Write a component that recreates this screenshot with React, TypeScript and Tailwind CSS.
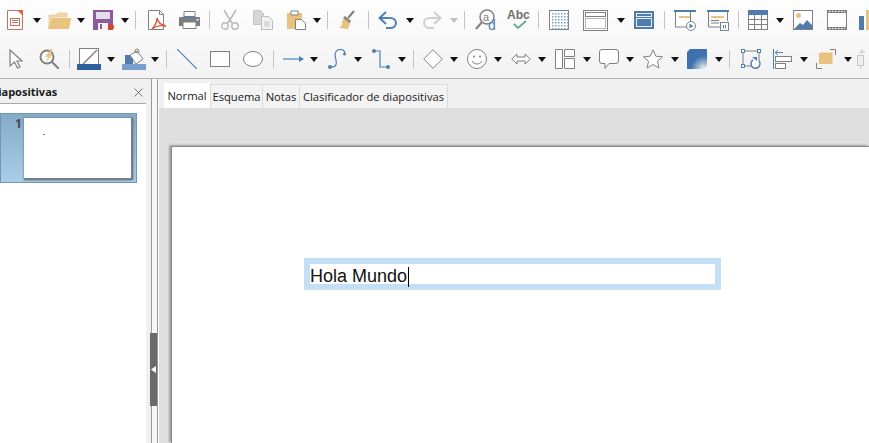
import type { ReactNode } from 'react';

const BLUE = '#4f81b5';
const GRAY = '#808080';
const LIGHT = '#b8b8b8';
const TAN = '#e8c27f';

interface IconProps {
  className: string;
}

function Svg({ className, w, h, children }: IconProps & { w: number; h: number; children: ReactNode }) {
  return (
    <svg aria-hidden className={`shrink-0 ${className}`} viewBox={`0 0 ${w} ${h}`} fill="none">
      {children}
    </svg>
  );
}

function Caret({ className }: IconProps) {
  return (
    <svg aria-hidden className={`h-[5px] w-[8px] shrink-0 ${className}`} viewBox="0 0 8 5">
      <path d="M0 0h8L4 5z" fill="#111" />
    </svg>
  );
}

function Sep({ className }: IconProps) {
  return <span className={`h-[18px] w-px shrink-0 bg-[#c4c4c4] ${className}`} />;
}

function NewDoc({ className }: IconProps) {
  return (
    <Svg className={className} w={16} h={20}>
      <path d="M.5.5h11l4 4v15H.5z" fill="#fff" stroke="#c5705c" />
      <path d="M10 0h6v6z" fill="#d9653f" />
      <rect x="3.5" y="8.5" width="9" height="7" stroke="#c5705c" />
      <path d="M5 10.500h6M5 12.500h6" stroke="#c5705c" />
    </Svg>
  );
}

function Folder({ className }: IconProps) {
  return (
    <Svg className={className} w={23} h={17}>
      <path d="M1 16V3h7l2-2h9v4H5z" fill="#f1d8a8" stroke="#e3c285" strokeWidth=".6" />
      <path d="M0 17l4-11h19v1l-2 10z" fill={TAN} />
    </Svg>
  );
}

function Save({ className }: IconProps) {
  return (
    <Svg className={className} w={21} h={20}>
      <path d="M0 0h20v20H0z" fill="#8e5a9e" />
      <path d="M3 2h14v7H3z" fill="#e6dcea" />
      <path d="M5 13h10v7H5z" fill="#f4f0f6" />
      <path d="M7 14h2v5H7z" fill="#8e5a9e" />
      <circle cx="18" cy="17" r="3" fill="#d4472a" />
    </Svg>
  );
}

function Pdf({ className }: IconProps) {
  return (
    <Svg className={className} w={19} h={20}>
      <path d="M.5.5h11l4 4v15H.5z" fill="#fff" stroke={GRAY} />
      <path d="M11.500.5v4h4" stroke={GRAY} />
      <path d="M9 8c1 4 3 7 9 8-5-1-10 0-14 3 3-3 5-7 5-11z" stroke="#d8533c" strokeWidth="1.400" fill="#fff" />
    </Svg>
  );
}

function Print({ className }: IconProps) {
  return (
    <Svg className={className} w={21} h={18}>
      <path d="M5 .5h11V6H5z" fill="#fff" stroke={GRAY} />
      <path d="M5 5h11v2H5z" fill={BLUE} />
      <path d="M0 7a1 1 0 0 1 1-1h19a1 1 0 0 1 1 1v8H0z" fill="#7d7d7d" />
      <path d="M4 11h13v6.500H4z" fill="#fff" stroke={GRAY} />
      <path d="M17.500 8h2v1.500h-2z" fill="#fff" />
    </Svg>
  );
}

function Cut({ className }: IconProps) {
  return (
    <Svg className={className} w={18} h={20}>
      <path d="M3 0l8 13M15 0L7 13" stroke={LIGHT} strokeWidth="1.500" />
      <circle cx="4" cy="16" r="3.200" stroke={LIGHT} strokeWidth="1.400" />
      <circle cx="14" cy="16" r="3.200" stroke={LIGHT} strokeWidth="1.400" />
    </Svg>
  );
}

function Copy({ className }: IconProps) {
  return (
    <Svg className={className} w={20} h={20}>
      <path d="M.5.5h7l3 3v11H.5z" fill="#d6d6d6" stroke="#c4c4c4" />
      <path d="M8.500 6.500h7l4 4v9h-11z" fill="#f2f2f2" stroke="#bcbcbc" />
      <path d="M11 12h6M11 14h6M11 16h6" stroke="#c4c4c4" />
    </Svg>
  );
}

function Paste({ className }: IconProps) {
  return (
    <Svg className={className} w={20} h={20}>
      <path d="M0 3h15v16H0z" fill={TAN} />
      <path d="M4 1h7v4H4z" fill="#fff" stroke={GRAY} />
      <path d="M8.500 9.500h6l4 4v6h-10z" fill="#fff" stroke={GRAY} />
    </Svg>
  );
}

function Broom({ className }: IconProps) {
  return (
    <Svg className={className} w={16} h={20}>
      <path d="M15 1L9 8" stroke={GRAY} strokeWidth="2" />
      <path d="M6 6l6 5-3 8-9-1c3-2 3-4 3-6z" fill={TAN} />
      <path d="M6 6l6 5-1.500 2L4 8z" fill="#8a8a8a" />
    </Svg>
  );
}

function Undo({ className }: IconProps) {
  return (
    <Svg className={className} w={20} h={18}>
      <path d="M8 1L1.500 7 8 13" stroke={BLUE} strokeWidth="2" />
      <path d="M2 7h10c8 0 8 10 0 10H8" stroke={BLUE} strokeWidth="2" />
    </Svg>
  );
}

function Redo({ className }: IconProps) {
  return (
    <Svg className={className} w={20} h={18}>
      <path d="M12 1l6.500 6L12 13" stroke="#cfcfcf" strokeWidth="2" />
      <path d="M18 7H8C0 7 0 17 8 17h4" stroke="#cfcfcf" strokeWidth="2" />
    </Svg>
  );
}

function Find({ className }: IconProps) {
  return (
    <Svg className={className} w={22} h={22}>
      <circle cx="12" cy="8" r="7" stroke={GRAY} strokeWidth="1.500" />
      <path d="M7 13L1 20" stroke={GRAY} strokeWidth="2" />
      <text x="8" y="12" fontSize="11" fill={GRAY} fontFamily="Liberation Sans, sans-serif">a</text>
      <text x="13" y="21" fontSize="14" fill={BLUE} fontFamily="Liberation Sans, sans-serif">d</text>
    </Svg>
  );
}

function Abc({ className }: IconProps) {
  return (
    <Svg className={className} w={23} h={22}>
      <text x="0" y="10" fontSize="12" fontWeight="700" fill="#6e6e6e" fontFamily="Liberation Sans, sans-serif">Abc</text>
      <path d="M7 15l4 4 8-7" stroke="#6fa892" strokeWidth="2" />
    </Svg>
  );
}

function Dots({ className }: IconProps) {
  const dots: ReactNode[] = [];
  for (let y = 3; y < 19; y += 3) {
    for (let x = 3; x < 19; x += 3) {
      dots.push(<rect key={`${x}-${y}`} x={x} y={y} width="1.500" height="1.500" fill="#7ba0c8" />);
    }
  }
  return (
    <Svg className={className} w={20} h={20}>
      <rect x=".5" y=".5" width="19" height="19" stroke={GRAY} fill="#fff" />
      {dots}
    </Svg>
  );
}

function Layout({ className }: IconProps) {
  return (
    <Svg className={className} w={25} h={21}>
      <rect x=".5" y=".5" width="24" height="20" stroke={GRAY} fill="#fff" />
      <rect x="2.500" y="2.500" width="20" height="4" stroke={GRAY} />
      <rect x="2.500" y="8.500" width="20" height="10" stroke="#b5b5b5" />
    </Svg>
  );
}

function Master({ className }: IconProps) {
  return (
    <Svg className={className} w={20} h={18}>
      <rect width="20" height="18" fill="#4f7cab" />
      <rect x="2.500" y="2.500" width="15" height="3" stroke="#e4ecf4" />
      <rect x="2.500" y="7.500" width="15" height="8" stroke="#e4ecf4" />
    </Svg>
  );
}

function ShowStart({ className }: IconProps) {
  return (
    <Svg className={className} w={22} h={21}>
      <path d="M0 1h22" stroke="#4f7cab" strokeWidth="2" />
      <path d="M1.500 2v15h15V2" stroke={GRAY} fill="#fff" />
      <path d="M5 7h11" stroke={TAN} strokeWidth="2" />
      <circle cx="17" cy="16" r="4.500" fill="#fff" stroke={GRAY} />
      <path d="M15.500 13.500l4 2.500-4 2.500z" fill={BLUE} />
    </Svg>
  );
}

function ShowTimer({ className }: IconProps) {
  return (
    <Svg className={className} w={22} h={21}>
      <path d="M0 1h22" stroke="#4f7cab" strokeWidth="2" />
      <path d="M1.500 2v15h13M20.500 2v9" stroke={GRAY} />
      <path d="M4 7h13" stroke={TAN} strokeWidth="2" />
      <path d="M4 10.500h8M4 13h8" stroke={GRAY} />
      <rect x="13.500" y="12.500" width="8" height="8" stroke={GRAY} fill="#fff" />
      <path d="M16.500 15v3.500M18.500 15v3.500" stroke={BLUE} />
    </Svg>
  );
}

function TableIcon({ className }: IconProps) {
  return (
    <Svg className={className} w={20} h={20}>
      <rect x=".5" y=".5" width="19" height="19" stroke={GRAY} fill="#fff" />
      <rect width="20" height="5" fill="#4f7cab" />
      <path d="M0 9.500h20M0 14.500h20M6.500 5v15M13.500 5v15" stroke={GRAY} />
    </Svg>
  );
}

function ImageIcon({ className }: IconProps) {
  return (
    <Svg className={className} w={20} h={20}>
      <rect x=".5" y=".5" width="19" height="19" stroke={GRAY} fill="#fff" />
      <circle cx="5.500" cy="5.500" r="2.500" fill={TAN} />
      <path d="M1 19l6-6 3 2 4-5 5 5v4z" fill="#4f7cab" />
    </Svg>
  );
}

function Film({ className }: IconProps) {
  return (
    <Svg className={className} w={20} h={20}>
      <rect x=".5" y=".5" width="19" height="19" stroke={GRAY} fill="#fff" />
      <path d="M0 0h20v3H0zM0 17h20v3H0z" fill={GRAY} />
      <path d="M2 1.500h16M2 18.500h16" stroke="#fff" strokeDasharray="1.500 1.500" />
    </Svg>
  );
}

function ChartIcon({ className }: IconProps) {
  return (
    <Svg className={className} w={12} h={20}>
      <rect y="6" width="5" height="14" fill="#4f7cab" />
      <rect x="7" width="5" height="20" fill={TAN} />
    </Svg>
  );
}

function Pointer({ className }: IconProps) {
  return (
    <Svg className={className} w={14} h={20}>
      <path d="M1 1l12 11H8l3 6-2.500 1-3-6L1 17z" fill="#fff" stroke={GRAY} strokeWidth="1.200" />
    </Svg>
  );
}

function ZoomPan({ className }: IconProps) {
  return (
    <Svg className={className} w={20} h={20}>
      <circle cx="8" cy="8" r="6.500" stroke={GRAY} strokeWidth="2" fill="#fff" />
      <path d="M12.500 12.500L20 20" stroke={GRAY} strokeWidth="2" />
      <path d="M12 0L6 8h3l-2 5 7-8h-3l3-5z" fill={TAN} />
    </Svg>
  );
}

function LineColor({ className }: IconProps) {
  return (
    <Svg className={className} w={24} h={22}>
      <rect x="2.500" y=".5" width="19" height="16" stroke={GRAY} fill="#fff" />
      <path d="M6 16L20 2" stroke={GRAY} strokeWidth="1.400" />
      <rect y="16" width="24" height="6" fill="#2f609f" />
    </Svg>
  );
}

function FillColor({ className }: IconProps) {
  return (
    <Svg className={className} w={24} h={22}>
      <path d="M3 7h8v9H3z" fill="#4f7cab" />
      <path d="M8 7l7-4 6 8-7 5z" fill="#fff" stroke={GRAY} />
      <circle cx="15" cy="3" r="2" stroke={GRAY} />
      <rect y="16" width="24" height="6" fill="#7a9fcf" />
    </Svg>
  );
}

function LineShape({ className }: IconProps) {
  return (
    <Svg className={className} w={20} h={20}>
      <path d="M0 0l20 20" stroke={BLUE} strokeWidth="1.200" />
    </Svg>
  );
}

function RectShape({ className }: IconProps) {
  return (
    <Svg className={className} w={20} h={16}>
      <rect x=".5" y=".5" width="19" height="15" stroke={GRAY} fill="#fff" />
    </Svg>
  );
}

function EllipseShape({ className }: IconProps) {
  return (
    <Svg className={className} w={20} h={16}>
      <ellipse cx="10" cy="8" rx="9.500" ry="7.500" stroke={GRAY} fill="#fff" />
    </Svg>
  );
}

function ArrowLine({ className }: IconProps) {
  return (
    <Svg className={className} w={21} h={8}>
      <path d="M0 4h17" stroke={BLUE} strokeWidth="1.200" />
      <path d="M16 1l5 3-5 3z" fill={BLUE} />
    </Svg>
  );
}

function CurveShape({ className }: IconProps) {
  return (
    <Svg className={className} w={18} h={20}>
      <path d="M2 18C9 19 9 14 7.500 9 6 3 9 .5 12 .5 15 .5 17 2 17 5" stroke={BLUE} strokeWidth="1.200" />
      <circle cx="2" cy="18" r="2" fill={BLUE} />
      <circle cx="16.500" cy="5" r="1.500" fill={BLUE} />
    </Svg>
  );
}

function Connector({ className }: IconProps) {
  return (
    <Svg className={className} w={18} h={20}>
      <path d="M2 2h6v16h8" stroke={BLUE} strokeWidth="1.200" />
      <circle cx="2" cy="2" r="2" fill={BLUE} />
      <circle cx="16" cy="18" r="2" fill={BLUE} />
    </Svg>
  );
}

function Diamond({ className }: IconProps) {
  return (
    <Svg className={className} w={20} h={20}>
      <path d="M10 .7L19.300 10 10 19.300.7 10z" stroke={GRAY} fill="#fff" />
    </Svg>
  );
}

function Smile({ className }: IconProps) {
  return (
    <Svg className={className} w={20} h={20}>
      <circle cx="10" cy="10" r="9.500" stroke={GRAY} fill="#fff" />
      <circle cx="7" cy="7.500" r="1" fill={GRAY} />
      <circle cx="13" cy="7.500" r="1" fill={GRAY} />
      <path d="M5 12c2 4 8 4 10 0" stroke={GRAY} />
    </Svg>
  );
}

function DoubleArrow({ className }: IconProps) {
  return (
    <Svg className={className} w={20} h={12}>
      <path d="M.7 6L6 1v3h8V1l5.300 5L14 11V8H6v3z" stroke={GRAY} fill="#fff" />
    </Svg>
  );
}

function BlockShape({ className }: IconProps) {
  return (
    <Svg className={className} w={20} h={20}>
      <path d="M.5.5h7v19h-7zM9.500.5h10v7h-10zM9.500 9.500h10v10h-10z" stroke={GRAY} fill="#fff" />
    </Svg>
  );
}

function Callout({ className }: IconProps) {
  return (
    <Svg className={className} w={20} h={20}>
      <path d="M3 .5h14a2.500 2.500 0 0 1 2.500 2.500v9a2.500 2.500 0 0 1-2.500 2.500H10L6 19.500v-5H3A2.500 2.500 0 0 1 .5 12V3A2.500 2.500 0 0 1 3 .5z" stroke={GRAY} fill="#fff" />
    </Svg>
  );
}

function Star({ className }: IconProps) {
  return (
    <Svg className={className} w={20} h={20}>
      <path d="M10 .8l2.800 6.400 6.700.6-5.100 4.500 1.600 6.800L10 15.500 4 19.100l1.600-6.800L.5 7.800l6.700-.6z" stroke={GRAY} fill="#fff" />
    </Svg>
  );
}

function Cube({ className }: IconProps) {
  return (
    <Svg className={className} w={20} h={20}>
      <defs>
        <radialGradient id="cube" cx=".85" cy="1" r=".65">
          <stop offset="0" stopColor="#f4f4f4" />
          <stop offset="1" stopColor="#3f72ad" />
        </radialGradient>
      </defs>
      <path d="M0 3l3-3h17v17l-3 3H0z" fill="url(#cube)" />
    </Svg>
  );
}

function RotateShape({ className }: IconProps) {
  return (
    <Svg className={className} w={21} h={20}>
      <rect x="2" y="2" width="16" height="15" stroke={GRAY} />
      <rect x=".5" y=".5" width="3" height="3" stroke={BLUE} fill="#fff" />
      <rect x="16.500" y=".5" width="3" height="3" stroke={BLUE} fill="#fff" />
      <rect x=".5" y="15.500" width="3" height="3" stroke={BLUE} fill="#fff" />
      <path d="M12 11a4.500 4.500 0 1 0 6 1" stroke={BLUE} strokeWidth="1.500" fill="#fff" />
      <path d="M11 8h5v4z" fill={BLUE} />
    </Svg>
  );
}

function Align({ className }: IconProps) {
  return (
    <Svg className={className} w={19} h={20}>
      <path d="M.5 0v20" stroke={BLUE} />
      <path d="M2 3.500h8M5 1L2 3.500 5 6" stroke={BLUE} />
      <rect x="2.500" y="7.500" width="16" height="5" stroke={GRAY} fill="#fff" />
      <rect x="2.500" y="14.500" width="10" height="5" stroke={GRAY} fill="#fff" />
    </Svg>
  );
}

function Arrange({ className }: IconProps) {
  return (
    <Svg className={className} w={20} h={20}>
      <path d="M14 .5h5.500V6M.5 14v5.500H6" stroke={GRAY} />
      <path d="M5 3.500h11.500V15H3V5.500a2 2 0 0 1 2-2z" fill={TAN} />
    </Svg>
  );
}

function Cutoff({ className }: IconProps) {
  return (
    <Svg className={className} w={8} h={20}>
      <path d="M5 0v5M2 3h6" stroke="#c8c8c8" />
      <rect x=".5" y="6.500" width="6" height="10" fill="#efefef" stroke="#c8c8c8" />
      <path d="M4 17v3" stroke="#c8c8c8" />
    </Svg>
  );
}

function Toolbar() {
  return (
    <div className="h-[79px] shrink-0 border-b border-[#b4b4b4] bg-gradient-to-b from-[#fefefe] to-[#f2f2f2]">
      <div className="flex h-[40px] items-center overflow-hidden">
        <NewDoc className="ml-[7px] h-[20px] w-[16px]" />
        <Caret className="ml-[10px]" />
        <Folder className="ml-[7px] h-[17px] w-[23px]" />
        <Caret className="ml-[6px]" />
        <Save className="ml-[8px] h-[20px] w-[21px]" />
        <Caret className="ml-[7px]" />
        <Sep className="ml-[6px]" />
        <Pdf className="ml-[12px] h-[20px] w-[19px]" />
        <Print className="ml-[12px] h-[18px] w-[21px]" />
        <Sep className="ml-[9px]" />
        <Cut className="ml-[11px] h-[20px] w-[18px]" />
        <Copy className="ml-[14px] h-[20px] w-[20px]" />
        <Paste className="ml-[14px] h-[20px] w-[20px]" />
        <Caret className="ml-[6px]" />
        <Sep className="ml-[6px]" />
        <Broom className="ml-[11px] h-[20px] w-[16px]" />
        <Sep className="ml-[13px]" />
        <Undo className="ml-[9px] h-[18px] w-[20px]" />
        <Caret className="ml-[8px]" />
        <Redo className="ml-[8px] h-[18px] w-[20px]" />
        <Caret className="ml-[8px] opacity-25" />
        <Sep className="ml-[6px]" />
        <Find className="ml-[10px] h-[22px] w-[22px]" />
        <Abc className="ml-[10px] h-[22px] w-[23px]" />
        <Sep className="ml-[8px]" />
        <Dots className="ml-[10px] h-[20px] w-[20px]" />
        <Layout className="ml-[14px] h-[21px] w-[25px]" />
        <Caret className="ml-[9px]" />
        <Master className="ml-[9px] h-[18px] w-[20px]" />
        <Sep className="ml-[10px]" />
        <ShowStart className="ml-[9px] h-[21px] w-[22px]" />
        <ShowTimer className="ml-[11px] h-[21px] w-[22px]" />
        <Sep className="ml-[9px]" />
        <TableIcon className="ml-[9px] h-[20px] w-[20px]" />
        <Caret className="ml-[8px]" />
        <ImageIcon className="ml-[9px] h-[20px] w-[20px]" />
        <Film className="ml-[14px] h-[20px] w-[20px]" />
        <ChartIcon className="ml-[12px] h-[20px] w-[12px]" />
      </div>
      <div className="flex h-[38px] items-center overflow-hidden">
        <Pointer className="ml-[9px] h-[20px] w-[14px]" />
        <ZoomPan className="ml-[16px] h-[20px] w-[20px]" />
        <Sep className="ml-[10px]" />
        <LineColor className="ml-[7px] h-[22px] w-[24px]" />
        <Caret className="ml-[6px]" />
        <FillColor className="ml-[7px] h-[22px] w-[24px]" />
        <Caret className="ml-[5px]" />
        <Sep className="ml-[7px]" />
        <LineShape className="ml-[10px] h-[20px] w-[20px]" />
        <RectShape className="ml-[13px] h-[16px] w-[20px]" />
        <EllipseShape className="ml-[13px] h-[16px] w-[20px]" />
        <Sep className="ml-[10px]" />
        <ArrowLine className="ml-[9px] h-[8px] w-[21px]" />
        <Caret className="ml-[6px]" />
        <CurveShape className="ml-[10px] h-[20px] w-[18px]" />
        <Caret className="ml-[8px]" />
        <Connector className="ml-[10px] h-[20px] w-[18px]" />
        <Caret className="ml-[8px]" />
        <Sep className="ml-[7px]" />
        <Diamond className="ml-[9px] h-[20px] w-[20px]" />
        <Caret className="ml-[7px]" />
        <Smile className="ml-[9px] h-[20px] w-[20px]" />
        <Caret className="ml-[7px]" />
        <DoubleArrow className="ml-[9px] h-[12px] w-[20px]" />
        <Caret className="ml-[7px]" />
        <BlockShape className="ml-[9px] h-[20px] w-[20px]" />
        <Caret className="ml-[8px]" />
        <Callout className="ml-[8px] h-[20px] w-[20px]" />
        <Caret className="ml-[7px]" />
        <Star className="ml-[9px] h-[20px] w-[20px]" />
        <Caret className="ml-[8px]" />
        <Cube className="ml-[8px] h-[20px] w-[20px]" />
        <Caret className="ml-[8px]" />
        <Sep className="ml-[6px]" />
        <RotateShape className="ml-[11px] h-[20px] w-[21px]" />
        <Align className="ml-[11px] h-[20px] w-[19px]" />
        <Caret className="ml-[8px]" />
        <Arrange className="ml-[8px] h-[20px] w-[20px]" />
        <Caret className="ml-[8px]" />
        <Cutoff className="ml-[5px] h-[20px] w-[8px]" />
      </div>
    </div>
  );
}

function SlidesPanel() {
  return (
    <div className="flex w-[151px] shrink-0">
      <div className="w-[146px] shrink-0 bg-white">
        <div className="flex h-[25px] items-center justify-between border-b border-[#a8a8a8] bg-[#f0f0f0] pr-[2px] pt-[2px]">
          <span className="-ml-[10px] text-[11px] font-bold whitespace-nowrap text-[#1a1a1a]">Diapositivas</span>
          <svg aria-hidden className="mr-[1px] h-[9px] w-[9px]" viewBox="0 0 9 9">
            <path d="M.5.5l8 8M8.500.5l-8 8" stroke="#666" strokeWidth=".9" />
          </svg>
        </div>
        <div className="mt-[9px] flex h-[70px] w-[137px] items-start border border-[#6f97b5] bg-gradient-to-b from-[#86abc7] to-[#a9cde9] pl-[14px] pt-[3px]">
          <span className="w-[9px] text-[12px] font-bold leading-[14px] text-[#3c4a55]">1</span>
          <div className="mt-[1px] flex h-[62px] w-[109px] items-start border-b-2 border-r-2 border-[#72808c] bg-white pl-[19px] pt-[16px] shadow-[0_0_2px_#55606a]">
            <span className="h-px w-[2px] bg-[#777]" />
          </div>
        </div>
      </div>
      <div className="w-[5px] bg-[#f0f0f0]" />
    </div>
  );
}

function Splitter() {
  return (
    <div className="w-[7px] shrink-0 border-x border-[#999] bg-[#f7f7f7]">
      <div className="-ml-[2px] mt-[254px] flex h-[73px] w-[7px] items-center justify-center bg-[#6b6b6b]">
        <svg aria-hidden className="h-[7px] w-[5px]" viewBox="0 0 5 7">
          <path d="M5 0v7L0 3.500z" fill="#fff" />
        </svg>
      </div>
    </div>
  );
}

function Tab({ children, active, className }: { children: ReactNode; active?: boolean; className: string }) {
  return (
    <div
      className={`flex items-center justify-center border-r border-[#dadada] pt-[1px] text-[11.2px] whitespace-nowrap text-[#1a1a1a] ${
        active ? 'h-[25px] bg-white' : 'h-[24px] border-t bg-[#f3f3f3]'
      } ${className}`}
    >
      {children}
    </div>
  );
}

function Workspace() {
  return (
    <div className="flex min-w-0 flex-1 flex-col bg-white pl-[1px]">
      <div className="flex h-[29px] shrink-0 items-end bg-[#f0f0f0] pl-[5px]">
        <Tab active className="w-[47px]">Normal</Tab>
        <Tab className="w-[52px]">Esquema</Tab>
        <Tab className="w-[37px]">Notas</Tab>
        <Tab className="w-[148px]">Clasificador de diapositivas</Tab>
      </div>
      <div className="flex min-h-0 flex-1 flex-col overflow-hidden bg-[#dedede] pl-[12px] pt-[38px]">
        <div className="flex-1 rounded-tl-[2px] border-l border-t border-[#8a8a8a] bg-white pl-[132px] pt-[111px] shadow-[-2px_-1px_2px_#a0a0a0]">
          <div className="h-[32px] w-[417px] border-[6px] border-[#c3dff5] bg-white">
            <span className="inline-block h-[20px] border-r border-black pr-[1px] text-[18px] leading-[18px] text-[#111] [font-family:'Liberation_Sans',sans-serif]">
              Hola Mundo
            </span>
          </div>
        </div>
      </div>
    </div>
  );
}

export default function App() {
  return (
    <div className="flex h-[443px] w-[869px] flex-col overflow-hidden bg-white [font-family:'Open_Sans','Noto_Sans',sans-serif]">
      <Toolbar />
      <div className="flex min-h-0 flex-1">
        <SlidesPanel />
        <Splitter />
        <Workspace />
      </div>
    </div>
  );
}
